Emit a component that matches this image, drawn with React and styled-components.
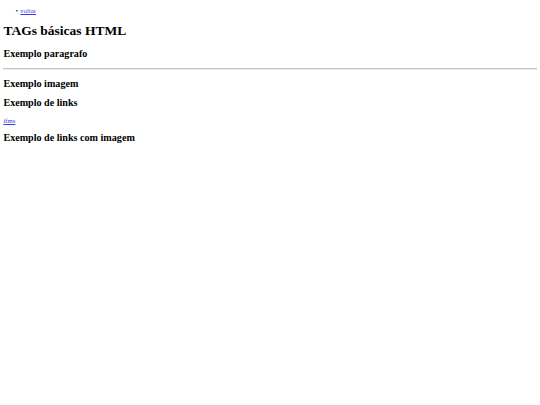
import React from "react";
import styled, { createGlobalStyle } from "styled-components";

// the reference is a default-styled page shot at 1280px and shrunk to 540px,
// so every browser default below is scaled by 540 / 1280
const GlobalStyle = createGlobalStyle`
  html, body {
    background: #fff;
  }
  body {
    margin: 3.4px;
    font-family: "Liberation Serif", "Times New Roman", serif;
    font-size: 6.75px;
    color: #000;
  }
`;

const Menu = styled.ul`
  margin: 3.75px 0 6.75px;
  padding-left: 16.9px;
  list-style: none;
`;

const Item = styled.li`
  &::before {
    content: "•";
    display: inline-block;
    width: 4.5px;
    margin-left: -4.5px;
    font-size: 6px;
  }
`;

const Link = styled.a`
  color: #3a3aee;
  text-decoration: underline;
`;

const Title = styled.h1`
  font-size: 13.5px;
  font-weight: bold;
  margin: 9.05px 0;
`;

const Heading = styled.h2`
  font-size: 10.125px;
  font-weight: bold;
  margin: 8.4px 0;
`;

const Rule = styled.hr`
  border: none;
  border-top: 1px solid #c4c4c4;
  border-bottom: 1px solid #ececec;
  margin: 3.4px 0;
`;

export default function App() {
  return (
    <>
      <GlobalStyle />
      <Menu>
        <Item>
          <Link href="#">voltar</Link>
        </Item>
      </Menu>
      <Title>TAGs básicas HTML</Title>
      <Heading>Exemplo paragrafo</Heading>
      <Rule />
      <Heading>Exemplo imagem</Heading>
      <Heading>Exemplo de links</Heading>
      <Link href="#">ifms</Link>
      <Heading>Exemplo de links com imagem</Heading>
    </>
  );
}
